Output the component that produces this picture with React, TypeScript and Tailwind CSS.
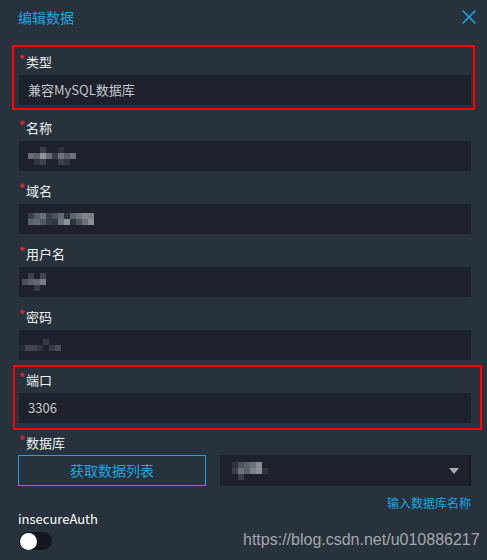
import { X } from 'lucide-react';

type Cell = string | null;

// pixelated (blurred) values from the screenshot
const mosaics: Record<string, { cells: Cell[][]; size: number }> = {
  name: {
    size: 6,
    cells: [
      [null, null, '#394049', null, null, '#2a313b', null, null, null],
      ['#666b74', '#59606a', '#8d939b', '#686e77', '#383f49', '#6c727b', '#565c66', '#6b7179', null],
      [null, '#30363f', '#3c424b', null, null, '#3a414a', '#323841', null, null],
    ],
  },
  domain: {
    size: 6,
    cells: [
      ['#3a414b', '#575e68', '#6a7079', '#3a414a', '#4d545e', '#646a73', '#2c333c', '#5a616a', '#6e747c', '#80868e', '#7c828a'],
      ['#5c636c', '#646b74', '#50575f', '#363d46', '#30363f', '#6c727a', '#8b9199', '#2e353e', '#4b525b', '#6a7078', '#8a9098'],
    ],
  },
  user: {
    size: 6,
    cells: [
      [null, '#3c434c', null, '#3e454e', null],
      ['#4a5059', '#5a606a', '#626871', '#767c84', null],
      [null, null, '#353b44', null, null],
    ],
  },
  password: {
    size: 6,
    cells: [
      [null, null, null, null, '#333a43', null, null],
      ['#262c35', '#40464f', '#3f454e', '#30363f', null, '#353b44', '#474d56'],
    ],
  },
  db: {
    size: 6,
    cells: [
      [null, '#2c333c', '#4c535c', '#5c626b', '#6b7178', '#868c93', null],
      [null, '#3a4049', '#6e747c', '#5a606a', '#7a8088', '#8a9098', '#2e353e'],
      [null, null, '#3a4049', null, null, null, null],
    ],
  },
};

function Mosaic({ id }: { id: string }) {
  const m = mosaics[id];
  return (
    <div className="flex flex-col">
      {m.cells.map((row, i) => (
        <div key={i} className="flex">
          {row.map((c, j) => (
            <div key={j} style={{ width: m.size, height: m.size, background: c ?? 'transparent' }} />
          ))}
        </div>
      ))}
    </div>
  );
}

function Label({ text }: { text: string }) {
  return (
    <div className="flex h-[20px] items-center text-[13px] leading-[20px] text-[#eef0f2]">
      <span className="-mt-[6px] w-[7px] text-[12px] font-bold leading-none text-[#e4252a]">*</span>
      <span>{text}</span>
    </div>
  );
}

function Field({ label, children, className = '' }: { label: string; children?: React.ReactNode; className?: string }) {
  return (
    <div className={`pt-[10px] ${className}`}>
      <Label text={label} />
      <div className="mt-[3px] flex h-[30px] items-center bg-[#1c212b] pl-[9px] text-[13px] text-[#c5c9cd]">
        {children}
      </div>
    </div>
  );
}

export default function App() {
  return (
    <div
      className="relative h-[560px] w-[487px] overflow-hidden bg-[#28323c]"
      style={{ fontFamily: '"Noto Sans CJK SC", "Noto Sans", sans-serif' }}
    >
      {/* Header */}
      <div className="flex h-[42px] items-start justify-between pl-[18px] pr-[6px] pt-[7px]">
        <span className="text-[14px] leading-[20px] text-[#1aa6e4]">编辑数据</span>
        <X className="-mt-[2px] h-[24px] w-[24px] text-[#1aa6e4]" strokeWidth={1.6} />
      </div>

      {/* Form */}
      <div className="pl-[19px] pr-[16px]">
        <Field label="类型">兼容MySQL数据库</Field>
        <Field label="名称" className="mt-[3px]">
          <Mosaic id="name" />
        </Field>
        <Field label="域名">
          <Mosaic id="domain" />
        </Field>
        <Field label="用户名">
          <div className="-ml-[6px]">
            <Mosaic id="user" />
          </div>
        </Field>
        <Field label="密码">
          <div className="-ml-[9px]">
            <Mosaic id="password" />
          </div>
        </Field>
        <Field label="端口">3306</Field>

        <div className="pt-[10px]">
          <Label text="数据库" />
          <div className="mt-[2px] flex h-[31px] gap-[14px]">
            <button className="-ml-[1px] flex w-[188px] items-center justify-center border border-[#1aa6e4] text-[14px] text-[#1aa6e4]">
              获取数据列表
            </button>
            <div className="flex flex-1 items-center justify-between border-r-2 border-[#161a21] bg-[#1c212b] pl-[6px] pr-[10px]">
              <Mosaic id="db" />
              <svg width="10" height="6" viewBox="0 0 10 6" className="mt-[1px]">
                <path d="M0 0 H10 L5 6 Z" fill="#a8acb1" />
              </svg>
            </div>
          </div>
        </div>

        <div className="mt-[9px] flex justify-end text-[12px] leading-[16px] text-[#1aa6e4]">输入数据库名称</div>

        <div className="-ml-[1px] text-[13px] leading-[16px] text-white">insecureAuth</div>
        <div className="-ml-[1px] mt-[4px] flex h-[20px] w-[35px] items-center rounded-full border border-[#2c343e] bg-[#14171d] px-[1px]">
          <div className="h-[17px] w-[17px] rounded-full bg-white" />
        </div>
      </div>

      {/* annotation boxes */}
      <div className="pointer-events-none absolute left-[12px] top-[45px] h-[65px] w-[463px] border-2 border-[#ff0000]" />
      <div className="pointer-events-none absolute left-[13px] top-[365px] h-[65px] w-[469px] border-2 border-[#ff0000]" />

      {/* watermark */}
      <div
        className="absolute left-[243px] top-[530px] text-[16px] leading-[20px] text-[#a3a8ad]"
        style={{ fontFamily: '"Liberation Sans", Arial, sans-serif' }}
      >
        https://blog.csdn.net/u010886217
      </div>
    </div>
  );
}
